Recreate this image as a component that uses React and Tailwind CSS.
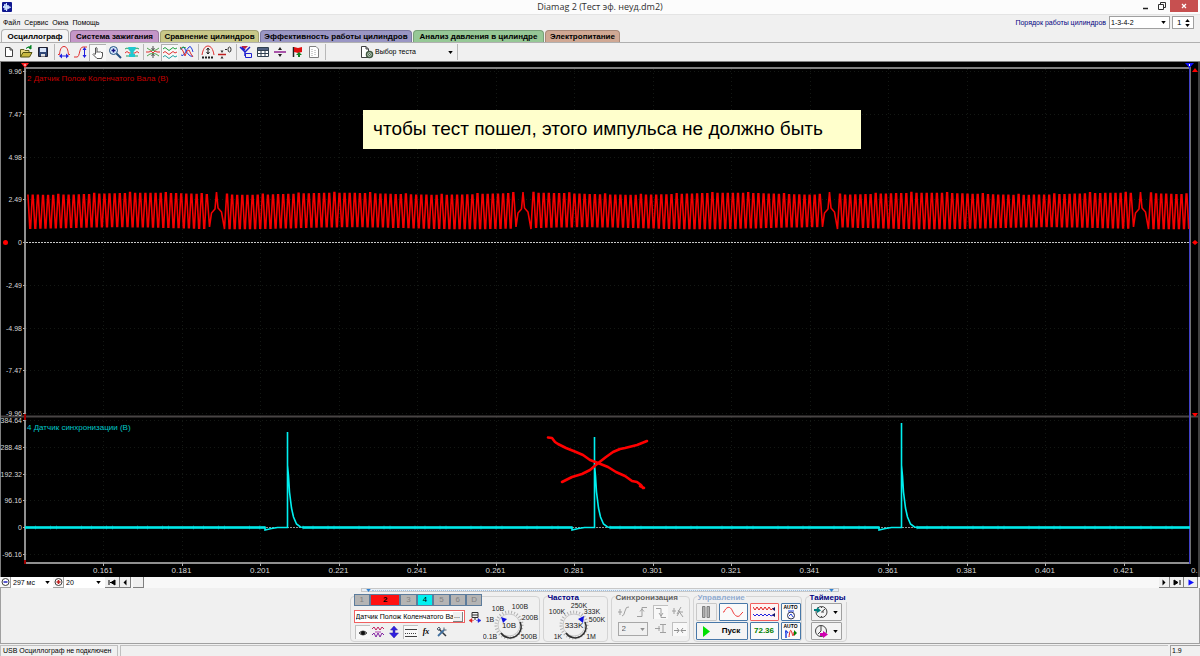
import React, { useState } from "react";

const TABS = [
  { name: "Осциллограф", style: "w-[68px] bg-[#f4f4f4] border-[#b0b0b0]" },
  { name: "Система зажигания", style: "w-[89px] bg-[#c496c8] border-[#9a78a0]" },
  { name: "Сравнение цилиндров", style: "w-[99px] bg-[#c8c888] border-[#a0a070]" },
  { name: "Эффективность работы цилиндров", style: "w-[152px] bg-[#9a96c4] border-[#7c78a0]" },
  { name: "Анализ давления в цилиндре", style: "w-[131px] bg-[#96c896] border-[#78a078]" },
  { name: "Электропитание", style: "w-[75px] bg-[#d0a894] border-[#a88878]" },
];

const CHANNELS = [
  { name: "1", style: "w-4 bg-[#b4b4b4] text-[#808080]" },
  { name: "2", style: "w-[30px] bg-[#ff1010] text-black font-bold" },
  { name: "3", style: "w-4 bg-[#b4b4b4] text-[#808080]" },
  { name: "4", style: "w-4 bg-[#00f0f0] text-black" },
  { name: "5", style: "w-4 bg-[#b4b4b4] text-[#808080]" },
  { name: "6", style: "w-4 bg-[#b4b4b4] text-[#808080]" },
  { name: "D", style: "w-4 bg-[#b4b4b4] text-[#808080]" },
];

const Icon = ({ children, className = "w-[14px] h-[14px]", box = "0 0 14 14" }) => (
  <svg viewBox={box} className={`block shrink-0 ${className}`} fill="none" strokeWidth="1">
    {children}
  </svg>
);

const ToolButton = ({ label, pressed, children }) => (
  <button
    aria-label={label}
    title={label}
    className={`w-[17px] h-[17px] shrink-0 flex items-center justify-center ${
      pressed ? "bg-[#f8f8f8] border-t border-l border-[#b0b0b0]" : ""
    }`}
  >
    <Icon>{children}</Icon>
  </button>
);

const ToolSep = () => <div className="w-1 h-4 shrink-0 border-r border-[#b8b8b8]" />;

const Arrow = ({ className = "" }) => (
  <svg viewBox="0 0 6 4" className={`w-[5px] h-[3px] pointer-events-none ${className}`}>
    <path d="M0 0H6L3 4Z" fill="currentColor" />
  </svg>
);

/* ---------- signals ---------- */

const GAPS = [216.5, 523, 829.5, 1140.5];

const crankPath = () => {
  const pts = [];
  const step = 5.11;
  // crank wheel: 58 teeth and a gap, repeated for every turn
  let start = GAPS[0] - 312;
  [...GAPS, 1450].forEach((gap) => {
    const from = start + 10.5;
    const to = gap - 9.7;
    const n = Math.round((to - from) / step);
    const w = (to - from) / n;
    for (let i = 0; i <= n; i++) {
      const x = from + i * w;
      if (x < 26 || x > 1188) continue;
      const top = 133.5 + 1 * Math.sin(x / 31) + (i % 7 === 0 ? -1 : 0);
      const low = 166.5 + 1 * Math.cos(x / 37);
      pts.push([x - 0.4, top], [x + 0.4, top]);
      if (i < n) pts.push([x + w / 2 - 0.4, low], [x + w / 2 + 0.4, low]);
    }
    if (gap < 1190) {
      pts.push([gap - 7, 166], [gap - 5, 152], [gap - 1.5, 148], [gap, 131]);
      pts.push([gap + 1.5, 147], [gap + 5, 151], [gap + 8, 168]);
    }
    start = gap;
  });
  return pts.map(([x, y]) => `${x.toFixed(1)},${y.toFixed(1)}`).join(" ");
};

const PULSES = [
  { x: 287.5, top: 371 },
  { x: 594.5, top: 376 },
  { x: 901.5, top: 362 },
];

const syncPath = () => {
  let d = "M25 466.5";
  PULSES.forEach(({ x, top }) => {
    d += `H${x - 22.5}V469L${x - 16} 467.5L${x - 10} 466.5H${x}V${top}`;
    d += `V404L${x + 1} 415L${x + 2} 431L${x + 4} 447L${x + 6} 456L${x + 9} 463L${x + 13} 466L${x + 17} 466.5`;
  });
  return d + "H1190";
};

// thick noisy level between the pulses
const syncLevel = () => {
  let d = "";
  let from = 25;
  PULSES.forEach(({ x }) => {
    d += `M${from} 466.5H${x - 22}`;
    from = x + 15;
  });
  return `${d}M${from} 466.5H1190`;
};

const TOP_LABELS = ["9.96", "7.47", "4.98", "2.49", "0", "-2.49", "-4.98", "-7.47", "-9.96"];
const LOW_LABELS = ["384.64", "288.48", "192.32", "96.16", "0", "-96.16"];
const TIMES = [
  "0.161", "0.181", "0.201", "0.221", "0.241", "0.261", "0.281", "0.301",
  "0.321", "0.341", "0.361", "0.381", "0.401", "0.421",
];

const Scope = () => (
  <svg viewBox="0 0 1200 516" className="block w-full bg-black" fontFamily="Liberation Sans, Arial, sans-serif">
    <path d="M0 .5H1200M.5 0V516M1199 0V516" stroke="#808080" fill="none" />
    <g stroke="#141814" strokeDasharray="1 3">
      {TIMES.map((t, i) => (
        <path key={t} d={`M${Math.round(103 + i * 78.5) + 0.5} 8V502`} />
      ))}
      {TOP_LABELS.map((t, i) => (
        <path key={t} d={`M26 ${Math.round(10 + i * 42.75) + 0.5}H1189`} />
      ))}
      {LOW_LABELS.map((t, i) => (
        <path key={t} d={`M26 ${Math.round(359 + i * 26.8) + 0.5}H1189`} />
      ))}
    </g>

    {/* frame */}
    <path d="M24 7H1190" stroke="#808080" strokeWidth="2" />
    <path d="M25 6V503" stroke="#909090" strokeWidth="2" />
    <path d="M1 355.5H1198" stroke="#484444" strokeWidth="2" />
    <path d="M24 502H1190" stroke="#909090" strokeWidth="2" />
    <path d="M1190.5 6V503" stroke="#707070" />
    <path d="M1189.5 6V503" stroke="#4040c8" />

    <g fill="#d8d8d8" fontSize="7" textAnchor="end">
      {TOP_LABELS.map((t, i) => (
        <text key={t} x="22" y={13 + i * 42.75}>{t}</text>
      ))}
      {LOW_LABELS.map((t, i) => (
        <text key={t} x="22" y={362 + i * 26.8}>{t}</text>
      ))}
    </g>
    <g stroke="#b0b0b0">
      {TOP_LABELS.map((t, i) => (
        <path key={t} d={`M23 ${Math.round(10 + i * 42.75) + 0.5}h2`} />
      ))}
      {LOW_LABELS.map((t, i) => (
        <path key={t} d={`M23 ${Math.round(359 + i * 26.8) + 0.5}h2`} />
      ))}
      {TIMES.map((t, i) => (
        <path key={t} d={`M${Math.round(103 + i * 78.5) + 0.5} 502v3`} />
      ))}
    </g>
    <g fill="#d8d8d8" fontSize="8" textAnchor="middle">
      {TIMES.map((t, i) => (
        <text key={t} x={103 + i * 78.5} y="512">{t}</text>
      ))}
    </g>
    <text x="1191" y="512" fontSize="8" fill="#d8d8d8">0.</text>

    <path d="M26 181.5H1189" stroke="#c8c8c8" strokeDasharray="2 1" />
    <path d="M26 466.5H1189" stroke="#909090" strokeDasharray="2 1" />

    <polyline points={crankPath()} fill="none" stroke="#f40000" strokeWidth="1.6" />
    <path d={syncPath()} fill="none" stroke="#00f0f0" strokeWidth="1.6" />
    <path d={syncLevel()} fill="none" stroke="#00e8e8" strokeWidth="2.6" />
    <path d={syncLevel()} fill="none" stroke="#00e8e8" strokeWidth="4" strokeDasharray="1 9 1 14 1 5 1 24" opacity="0.4" />

    <text x="27" y="20" fontSize="8" fill="#c40000">2 Датчик Полож Коленчатого Вала (В)</text>
    <text x="27" y="369" fontSize="8" fill="#00c8c8">4 Датчик синхронизации (В)</text>

    {/* cursors and range marks */}
    <path d="M21 2H29L25 7Z" fill="#ff2020" />
    <path d="M25 3V5" stroke="#fff" />
    <path d="M25 353V359M25 499V503" stroke="#a00000" strokeWidth="2" />
    <path d="M1185 2H1194L1189.500 7Z" fill="#1010ff" />
    <path d="M1189.500 3V5" stroke="#fff" />
    <path d="M1192 11L1195 7L1198 11Z" fill="#f00" />
    <path d="M1192 352H1198L1195 356Z" fill="#f00" />
    <circle cx="5.500" cy="181.500" r="2.500" fill="#f00" />
    <path d="M1192 181.500L1195 179L1198 181.500L1195 184Z" fill="#f00" />

    {/* hand drawn cross */}
    <g stroke="#ff0000" strokeWidth="2.6" strokeLinecap="round" strokeLinejoin="round" fill="none">
      <path d="M548 376.500L552 377L555 381L558 383L566 387L576 391L583 394L590 399L598 402L608 406L616 411L625 415L632 420L637 421L641 424L643 427M640 425L644 427" />
      <path d="M562 421L572 416L582 413L590 409L597 403L606 396L613 391L620 388L625 387L637 384L647 380" />
    </g>
  </svg>
);

/* ---------- bottom panel ---------- */

const Group = ({ title, color = "text-[#000080]", className = "", children }) => (
  <fieldset className={`relative mt-1 h-[46px] min-w-0 border border-[#d4d4d4] rounded-sm ${className}`}>
    {title && (
      <legend className={`absolute -top-[4px] left-[3px] px-px bg-[#f0f0f0] text-[8px] leading-[9px] font-bold ${color}`}>
        {title}
      </legend>
    )}
    {children}
  </fieldset>
);

const Knob = ({ value, labels, width, cx, pointer }) => (
  <svg viewBox={`0 0 ${width} 44`} className="block shrink-0 h-[44px]" fontFamily="Liberation Sans, Arial, sans-serif" style={{ width }}>
    <circle cx={cx} cy="28" r="13" fill="none" stroke="#b0b0b0" strokeWidth="3" strokeDasharray="1 2" />
    <circle cx={cx} cy="28" r="11" fill="#f0f0f0" stroke="#c8c8c8" />
    <path d={`M${cx - 8} 36A11 11 0 0 0 ${cx + 11} 25`} fill="none" stroke="#303030" strokeWidth="1.5" />
    <path d={pointer} fill="#1010e0" />
    <text x={cx} y="31" fontSize="8" textAnchor="middle" fill="#202020">{value}</text>
    <g fontSize="7" textAnchor="middle" fill="#202020">
      {labels.map(([t, x, y]) => (
        <text key={t} x={x} y={y}>{t}</text>
      ))}
    </g>
  </svg>
);

const PanelButton = ({ label, className = "", children }) => (
  <button
    aria-label={label}
    className={`h-[18px] flex items-center justify-center border rounded-[1px] ${className}`}
  >
    {children}
  </button>
);

const SmallButton = ({ label, pressed, children }) => (
  <button
    aria-label={label}
    className={`w-[15px] h-[14px] flex items-center justify-center ${
      pressed ? "bg-[#f8f8f8] border-t border-l border-[#c0c0c0]" : ""
    }`}
  >
    <Icon className="w-3 h-3" box="0 0 12 12">{children}</Icon>
  </button>
);

const ControlPanel = () => (
  <div className="flex justify-center gap-[3px] h-[51px] pr-1">
    <Group className="w-[190px]">
      <div className="flex">
        <div className="w-[132px] -mt-[3px] pl-[3px]">
          <div className="flex">
            {CHANNELS.map((c) => (
              <button
                key={c.name}
                className={`h-3 flex-auto text-[8px] leading-[10px] border border-[#5c7c9c] ${c.style}`}
              >
                {c.name}
              </button>
            ))}
          </div>
          <div className="flex items-center mt-1 gap-1">
            <div className="flex items-center w-[111px] h-[13px] px-px bg-white border border-[#f06060]">
              <input
                aria-label="Датчик"
                defaultValue="Датчик Полож Коленчатого Вала"
                className="min-w-0 flex-1 h-[11px] text-[7px] outline-none"
              />
              <button aria-label="Выбрать датчик" className="w-[10px] h-[10px] bg-[#f0f0f0] border-r border-b border-[#808080] text-[7px] leading-[6px]">
                ...
              </button>
            </div>
            <Icon className="w-3 h-3" box="0 0 12 12">
              <path d="M3 1.500H9V6.500H3ZM3 4H9M6 7V9" stroke="#303030" />
              <path d="M0 9.500L3 7.500V11.500ZM1 9.500H5" fill="#e02020" stroke="#e02020" strokeWidth=".5" />
              <path d="M12 9.500L9 7.500V11.500ZM7 9.500H11" fill="#2020e0" stroke="#2020e0" strokeWidth=".5" />
            </Icon>
          </div>
          <div className="flex mt-[2px] gap-px pl-px">
            <SmallButton label="Показать канал" pressed>
              <path d="M2 6Q6 2 10 6Q6 10 2 6Z" fill="#909090" stroke="#505050" />
              <circle cx="6" cy="6" r="2" fill="#101010" />
            </SmallButton>
            <SmallButton label="Фильтр">
              <path d="M0 3L2 1L4 4L6 1L8 4L10 1L12 3" stroke="#c02060" />
              <path d="M0 9L2 7L4 11L6 7L8 11L10 7L12 9" stroke="#8020a0" />
              <path d="M3 6H9" stroke="#b040b0" />
            </SmallButton>
            <SmallButton label="Масштаб">
              <path d="M6 0L9.500 4H7V7H10.500L6 12L1.500 7H5V4H2.500Z" fill="#3020e0" stroke="#3020a0" strokeWidth=".5" />
            </SmallButton>
            <SmallButton label="Уровни" pressed>
              <path d="M0 2.500H12M0 9.500H12" stroke="#404040" />
              <path d="M0 6.500H12" stroke="#404040" strokeDasharray="1 1" />
            </SmallButton>
            <button aria-label="Функция" className="w-[15px] h-[14px] text-[8px] leading-[14px] italic font-bold font-['Liberation_Serif',serif]">
              fx
            </button>
            <SmallButton label="Настройки">
              <path d="M3 3L10 10" stroke="#303840" strokeWidth="1.500" />
              <path d="M2 10L8 4" stroke="#4070a0" strokeWidth="1.800" />
              <path d="M1 3L3 1L4.500 3L3 4.500ZM8 1.500V4H10.500" stroke="#506070" />
            </SmallButton>
          </div>
        </div>
        <Knob
          value="10В"
          width={56}
          cx={26}
          pointer="M18 20L24 22L20 26Z"
          labels={[["10В", 15, 14], ["100В", 37, 12], ["200В", 47, 23], ["500В", 46, 42], ["0.1В", 7, 42], ["1В", 7, 25]]}
        />
      </div>
    </Group>

    <Group title="Частота" className="w-[65px]">
      <Knob
        value="333K"
        width={63}
        cx={30}
        pointer="M40 19L34 22L39 26Z"
        labels={[["100K", 13, 17], ["250K", 35, 11], ["333K", 48, 17], ["500K", 53, 25], ["1K", 14, 42], ["1M", 47, 42]]}
      />
    </Group>

    <Group title="Синхронизация" color="text-[#606060]" className="w-[79px]">
      <div className="flex gap-[3px] pt-2 pl-[5px]">
        <SmallButton label="Наклон">
          <path d="M0 6H4M2 3V9M4 10Q6 10 7 5T11 1" stroke="#a0a0a0" />
        </SmallButton>
        <SmallButton label="Фронт">
          <path d="M1 10.500H6V1.500H11M4 5.500L6 3L8 5.500" stroke="#a0a0a0" />
        </SmallButton>
        <SmallButton label="Спад" pressed>
          <path d="M1 1.500H6V10.500H11M4 6L6 9L8 6" stroke="#a0a0a0" />
        </SmallButton>
        <SmallButton label="Сигнал">
          <path d="M0 5H4M2 2V8M5 8L9 1M6 4L11 11M7 6L11 6M5 10L8 5" stroke="#a0a0a0" />
        </SmallButton>
      </div>
      <div className="flex items-center mt-[3px] pl-[6px]">
        <div className="relative w-[30px]">
          <select aria-label="Канал синхронизации" className="appearance-none block w-full h-[14px] pl-[3px] border border-[#a8a8a8] text-[8px] leading-[12px] text-[#606060]">
            <option>2</option>
          </select>
          <Arrow className="absolute right-[3px] top-[6px] text-[#909090]" />
        </div>
        <div className="flex gap-[3px] pl-[6px]">
          <SmallButton label="Уровень">
            <path d="M5 1.500H11M5 9.500H11M0 5.500H5M8 2V9M4 3V8" stroke="#a0a0a0" />
          </SmallButton>
          <SmallButton label="Положение" pressed>
            <path d="M0 6.500H5M3 4L5 6.500L3 9M12 6.500H7M9 4L7 6.500L9 9" stroke="#909090" />
          </SmallButton>
        </div>
      </div>
    </Group>

    <Group title="Управление" color="text-[#90acd0]" className="w-[109px]">
      <div className="flex gap-0.5 pt-[6px] pl-0.5">
        <PanelButton label="Пауза" className="w-[21px] border-[#c8c8c8]">
          <Icon className="w-2 h-3" box="0 0 8 12">
            <path d="M.5 .500H3V11.500H.5ZM5 .500H7.500V11.500H5Z" fill="#b0b0b0" stroke="#808080" />
          </Icon>
        </PanelButton>
        <PanelButton label="Синус" className="w-[29px] border-[#4878a8] bg-[#fafafa]">
          <Icon className="w-5 h-3" box="0 0 20 12">
            <path d="M0 6H1C3 1 7 -1 9.500 5S16 12 18 8L20 6" stroke="#f04040" />
          </Icon>
        </PanelButton>
        <PanelButton label="Сигналы" className="w-[29px] border-[#f06060] bg-[#fff4f4]">
          <Icon className="w-[22px] h-3" box="0 0 22 12">
            <path d="M0 1L2 4L4 1L6 4L8 1L10 4L12 1L14 4L16 1L18 4L20 2" stroke="#e02020" />
            <path d="M0 8L2 10L4 8L6 10L8 8L10 10L12 8L14 10L16 8L18 10L20 9" stroke="#2020e0" />
            <path d="M19 3L22 1V5ZM19 9L22 7V11Z" fill="#101060" />
          </Icon>
        </PanelButton>
        <PanelButton label="Авто уровень" className="w-5 flex-col border-[#4878a8] bg-[#fafafa]">
          <span className="text-[5px] leading-[5px] font-bold">AUTO</span>
          <Icon className="w-[10px] h-[10px]" box="0 0 10 10">
            <circle cx="5" cy="5.500" r="3.500" stroke="#303050" />
            <path d="M2 1H8M3 6L5 4L7 7" stroke="#2040e0" />
          </Icon>
        </PanelButton>
      </div>
      <div className="flex gap-0.5 pt-px pl-0.5">
        <PanelButton className="w-[52px] gap-3 border-[#4878a8] bg-[#f4f4f4] text-[8px] font-bold">
          <Icon className="w-[7px] h-[11px]" box="0 0 7 11">
            <path d="M0 0L7 5.500L0 11Z" fill="#00e000" />
          </Icon>
          Пуск
        </PanelButton>
        <PanelButton className="w-[29px] border-[#4878a8] bg-[#fafafa] text-[8px] font-bold text-[#008000]">
          72.36
        </PanelButton>
        <PanelButton label="Авто запуск" className="w-5 flex-col border-[#4878a8] bg-[#fafafa]">
          <span className="text-[5px] leading-[5px] font-bold">AUTO</span>
          <Icon className="w-3 h-[10px]" box="0 0 12 10">
            <path d="M1 9V4M0 4L1 2L3 4" stroke="#2040e0" strokeWidth="1.500" />
            <path d="M4 8C5 0 6 0 7 4S8 8 9 3" stroke="#e02020" />
            <path d="M9 1L12 4L9 7Z" fill="#008000" />
          </Icon>
        </PanelButton>
      </div>
    </Group>

    <Group title="Таймеры" className="w-[42px]">
      <div className="flex flex-col gap-px pt-[6px] pl-[5px]">
        <PanelButton label="Таймер запуска" className="w-[31px] gap-[5px] border-[#a0a0a0] bg-[#f4f4f4]">
          <Icon>
            <circle cx="7.500" cy="7" r="5.500" stroke="#404040" />
            <path d="M7.500 7L11 4M7.500 7H10M7.500 2V3M7.500 11V12" stroke="#404040" />
            <path d="M0 4H3V2L7 5.500L3 8V6H0Z" fill="#008080" />
          </Icon>
          <Arrow />
        </PanelButton>
        <PanelButton label="Таймер остановки" className="w-[31px] gap-[5px] border-[#a0a0a0] bg-[#f4f4f4]">
          <Icon>
            <circle cx="7" cy="7" r="5.500" stroke="#404040" />
            <path d="M7 7V2M7 7L4 10" stroke="#404040" />
            <path d="M6 9H9V7L14 10.500L9 14V12H6Z" fill="#d000b0" />
          </Icon>
          <Arrow />
        </PanelButton>
      </div>
    </Group>
  </div>
);

const NavButton = ({ label, className = "w-[14px]", children }) => (
  <button
    aria-label={label}
    className={`h-[11px] flex items-center justify-center bg-[#f0f0f0] border-r border-b border-[#808080] ${className}`}
  >
    <Icon className="w-2 h-[7px]" box="0 0 8 7">{children}</Icon>
  </button>
);

const App = () => {
  const [order, setOrder] = useState("1-3-4-2");
  const [cylinder, setCylinder] = useState("1");

  return (
    <div className="min-h-screen flex flex-col bg-[#f0f0f0] text-black text-[8px] leading-[10px] overflow-hidden font-['Liberation_Sans',Arial,sans-serif]">
      {/* title bar */}
      <header className="h-[14px] shrink-0 flex items-center bg-[#fcfcfc]">
        <div className="flex-1 pl-[2px]">
          <Icon className="w-[10px] h-[10px]" box="0 0 10 10">
            <rect width="10" height="10" rx="1" fill="#101890" />
            <path d="M1 5H2V4V6L3 2V8L4.500 1V9L6 3V7L7 4V6L9 5" stroke="#d0e4ff" />
          </Icon>
        </div>
        <h1 className="text-[9px] leading-[14px] text-[#303030] font-['Open_Sans',sans-serif]">
          Diamag 2 (Тест эф. неуд.dm2)
        </h1>
        <div className="flex-1 flex justify-end self-start pr-[2px]">
          <button aria-label="Свернуть" className="w-4 h-3 flex items-center justify-center">
            <Icon className="w-2 h-2" box="0 0 8 8"><path d="M1 6.500H6" stroke="#202020" strokeWidth="1.500" /></Icon>
          </button>
          <button aria-label="Восстановить" className="w-4 h-3 flex items-center justify-center">
            <Icon className="w-2 h-2" box="0 0 8 8"><path d="M.5 2.500H5.500V7.500H.5ZM2.500 2V.500H7.500V5.500H6" stroke="#303030" /></Icon>
          </button>
          <button aria-label="Закрыть" className="w-7 h-3 flex items-center justify-center bg-[#c75050]">
            <Icon className="w-[6px] h-[6px]" box="0 0 6 6"><path d="M1 1L5 5M5 1L1 5" stroke="#fff" strokeWidth="1.200" /></Icon>
          </button>
        </div>
      </header>

      {/* menu */}
      <div className="h-4 shrink-0 flex items-center border-t border-[#e4e4e4] pl-[3px] pr-[6px]">
        <nav className="flex gap-1 flex-1 text-[7px]">
          <button>Файл</button>
          <button>Сервис</button>
          <button>Окна</button>
          <button>Помощь</button>
        </nav>
        <label htmlFor="order" className="text-[7px] text-[#000080] pr-[3px]">Порядок работы цилиндров</label>
        <div className="relative w-[61px]">
          <select
            id="order"
            value={order}
            onChange={(e) => setOrder(e.target.value)}
            className="appearance-none block w-full h-[13px] pl-px bg-white border border-[#a0a0a0] text-[7px] leading-[11px]"
          >
            <option>1-3-4-2</option>
            <option>1-2-4-3</option>
          </select>
          <Arrow className="absolute right-1 top-[5px]" />
        </div>
        <div className="flex items-center w-[22px] h-[13px] ml-[2px] bg-white border border-[#a0a0a0]">
          <input
            aria-label="Цилиндр"
            value={cylinder}
            onChange={(e) => setCylinder(e.target.value)}
            className="w-3 h-[11px] pl-1 text-[8px] outline-none"
          />
          <div className="flex flex-col gap-[2px]">
            <button aria-label="Больше"><Arrow className="rotate-180" /></button>
            <button aria-label="Меньше"><Arrow /></button>
          </div>
        </div>
      </div>

      {/* tabs */}
      <div className="h-[13px] shrink-0 flex items-end gap-px pl-px border-b border-[#b0b0b0]">
        {TABS.map((tab, i) => (
          <button
            key={tab.name}
            className={`text-[8px] leading-[11px] font-bold whitespace-nowrap border-t border-x rounded-t-sm ${tab.style} ${
              i === 0 ? "h-[13px]" : "h-3"
            }`}
          >
            {tab.name}
          </button>
        ))}
      </div>

      {/* toolbar */}
      <div className="h-[18px] shrink-0 flex items-center">
        <ToolButton label="Новый">
          <path d="M3.500 2.500H8L10.500 5V11.500H3.500ZM8 2.500V5H10.500" fill="#fff" stroke="#404040" />
        </ToolButton>
        <ToolButton label="Открыть">
          <path d="M1.500 12V4.500H5L6 5.500H10V7.500" fill="#e8d880" stroke="#606020" />
          <path d="M1.500 12L4 7.500H13L10.500 12Z" fill="#c8b840" stroke="#505010" />
          <path d="M7 3.500Q9 1 12 2M12 0V4L10 3" stroke="#008020" fill="#008020" />
        </ToolButton>
        <ToolButton label="Сохранить">
          <path d="M2.500 2.500H11.500V11.500H2.500Z" fill="#304878" stroke="#202030" />
          <path d="M4 3H10V7H4Z" fill="#d8e4f8" />
          <path d="M5 9H9V11.500H5Z" fill="#e0e0e0" />
        </ToolButton>
        <ToolSep />
        <ToolButton label="Масштаб по времени">
          <path d="M1 9.500H2.500C3 5 4 1.500 7 1.500S11 5 11.500 9.500H13" stroke="#e03030" />
          <path d="M3 11H11" stroke="#2020e0" />
          <path d="M2 11L5 8.500V13.500ZM12 11L9 8.500V13.500Z" fill="#2020e0" />
        </ToolButton>
        <ToolButton label="Масштаб по уровню">
          <path d="M0 12H3C6 12 5 2 9 2H13" stroke="#e03030" />
          <path d="M10.500 3V11" stroke="#2020e0" />
          <path d="M10.500 2L8.500 5H12.500ZM10.500 13L8.500 10H12.500Z" fill="#2020e0" />
        </ToolButton>
        <ToolButton label="Рука" pressed>
          <path d="M4.500 8V2Q5.300 1 6 2V6.500L7 5.500L8 6.500L9 5.500L10 6.500L11.500 6.500V10L10.500 12.500H6L2 8.500L3 7.500L4.500 9" fill="#fff" stroke="#404040" strokeWidth=".9" />
        </ToolButton>
        <ToolButton label="Лупа">
          <circle cx="5.500" cy="5.500" r="4" fill="#d8ecff" stroke="#205080" />
          <path d="M3.500 5.500H7.500M5.500 3.500V7.500" stroke="#101080" strokeWidth="1.500" />
          <path d="M8.500 8.500L13 13" stroke="#205080" strokeWidth="2" />
        </ToolButton>
        <ToolButton label="Фильтр сигнала">
          <path d="M0 4Q2 2 4 4H10Q12 2 14 4M1 11H13" stroke="#20a060" />
          <path d="M0 8Q2 5 4 8H10Q12 5 14 8" stroke="#e03030" />
          <path d="M3 2H11L10 5L8.500 7V9H10V12H4V9H5.500V7L4 5Z" fill="#20c8d0" />
        </ToolButton>
        <ToolSep />
        <ToolButton label="Совместить">
          <path d="M1 3L4 5L7 5.500L10 5L13 3M1 11L4 9L7 8.500L10 9L13 11" stroke="#50a050" />
          <path d="M0 7H3L5 6L7 8L9 6L11 7H14" stroke="#e03030" />
          <path d="M7 1V4M7 13V10M5.500 3L7 5L8.500 3M5.500 11L7 9L8.500 11" stroke="#505050" />
        </ToolButton>
        <ToolButton label="Разделить" pressed>
          <path d="M0 3Q2 0 4 3T8 3T12 3L14 2" stroke="#20a040" />
          <path d="M0 7Q2 4 4 7T8 7T12 7L14 6" stroke="#e03030" />
          <path d="M0 11Q2 8 4 11T8 11T12 11L14 10" stroke="#20a0a0" />
        </ToolButton>
        <ToolButton label="Наложить">
          <path d="M1 5Q3 0 5 4T9 10T13 11" stroke="#2040e0" />
          <path d="M1 10Q3 12 5 8T9 2T13 7" stroke="#2040e0" />
          <path d="M0 2L3 6L5 11L7 6L9 5L11 9L13 12" stroke="#e03030" />
          <path d="M0 4L3 2L6 3" stroke="#20a040" />
        </ToolButton>
        <ToolSep />
        <ToolButton label="Авто масштаб">
          <path d="M1 10C2 4 4 1 7 1S12 4 13 10" stroke="#e03030" />
          <path d="M7 3V9M5.500 5L7 3L8.500 5M5.500 7L7 9L8.500 7" stroke="#202020" />
          <path d="M1 12.500H13" stroke="#202020" strokeWidth="2" strokeDasharray="2 1" />
        </ToolButton>
        <ToolButton label="Установить ноль">
          <path d="M0 9.500H8" stroke="#c02020" strokeWidth="1.500" />
          <path d="M2.500 5.500H5.500L4 8ZM2.500 13.500H5.500L4 11Z" fill="#303030" />
          <path d="M7 4.500H9" stroke="#303030" />
          <ellipse cx="11.500" cy="4.500" rx="1.500" ry="2.500" stroke="#303030" />
        </ToolButton>
        <ToolSep />
        <ToolButton label="Измерения">
          <path d="M1 2L6 7L11 2M6 7V11M3 2L6 5" stroke="#2020d0" strokeWidth="1.500" />
          <path d="M2 1H9L6 4Z" fill="#c02040" />
          <path d="M6.500 8.500H12.500V12.500H6.500Z" stroke="#2020d0" />
        </ToolButton>
        <ToolButton label="Таблица">
          <path d="M1.500 2.500H12.500V11.500H1.500ZM1 5.500H13M1 8.500H13M5 3V12M9 3V12" fill="#fff" stroke="#304050" />
          <path d="M2 3H12V5H2Z" fill="#506080" />
        </ToolButton>
        <ToolButton label="Делитель">
          <path d="M1 7H13" stroke="#902090" strokeWidth="1.500" />
          <path d="M7 2L9 5H5ZM7 12L9 9H5Z" fill="#202020" />
        </ToolButton>
        <ToolButton label="Метка">
          <path d="M3.500 2V12" stroke="#202020" strokeWidth="1.500" />
          <path d="M4 2L8 3L12 2V7L8 8L4 7Z" fill="#e01010" />
          <path d="M9 7L12 10H10V12H8V10H6Z" fill="#108020" />
        </ToolButton>
        <ToolButton label="Отчёт">
          <path d="M2.500 1.500H9L11.500 4V12.500H2.500Z" fill="#fff" stroke="#808080" />
          <path d="M5 4V11M8 5V11" stroke="#a0a0a0" strokeDasharray="1 1" />
        </ToolButton>
        <ToolSep />
        <div className="relative flex items-center w-[132px] h-4 pl-[34px] border-r border-[#b8b8b8]">
          <Icon>
            <path d="M1.500 1.500H6L8.500 4V12.500H1.500ZM6 1.500V4H8.500" fill="#fff" stroke="#404040" />
            <circle cx="9.500" cy="9.500" r="3" fill="#c8d8c8" stroke="#405840" strokeWidth="1.500" />
            <circle cx="9.500" cy="9.500" r="1" stroke="#405840" />
          </Icon>
          <select aria-label="Выбор теста" className="appearance-none flex-1 min-w-0 pl-px h-3 text-[7px] leading-3">
            <option>Выбор теста</option>
          </select>
          <Arrow className="absolute right-1 top-[7px]" />
        </div>
      </div>

      {/* oscilloscope */}
      <main className="relative shrink-0">
        <Scope />
        <div className="absolute left-[363px] top-[49px] w-[498px] h-[39px] pl-[10px] bg-[#ffffcc] text-[19px] leading-[37px] whitespace-nowrap">
          чтобы тест пошел, этого импульса не должно быть
        </div>
      </main>

      {/* time scale and scrolling */}
      <div className="h-[11px] shrink-0 flex items-center bg-[#f8f8f8] pr-[2px]">
        <button aria-label="Уменьшить" className="w-[11px] h-[11px] border-r border-b border-[#a0a0a0]">
          <Icon className="w-[10px] h-[10px]" box="0 0 10 10">
            <circle cx="5.500" cy="5" r="3.500" fill="#fff" stroke="#404040" />
            <path d="M3.500 5H7.500" stroke="#2020c0" strokeWidth="1.500" />
          </Icon>
        </button>
        <div className="relative w-[42px]">
          <select aria-label="Развёртка" className="appearance-none block w-full h-[11px] pl-[2px] bg-white text-[7px] leading-[11px]">
            <option>297 мс</option>
          </select>
          <Arrow className="absolute right-[3px] top-1" />
        </div>
        <button aria-label="Увеличить" className="w-[11px] h-[11px] border-r border-b border-[#a0a0a0]">
          <Icon className="w-[10px] h-[10px]" box="0 0 10 10">
            <circle cx="5.500" cy="5" r="3.500" fill="#fff" stroke="#404040" />
            <path d="M3.500 5H7.500M5.500 3V7" stroke="#c02020" strokeWidth="1.500" />
          </Icon>
        </button>
        <div className="relative w-[41px]">
          <select aria-label="Скорость" className="appearance-none block w-full h-[11px] pl-[2px] bg-white text-[7px] leading-[11px]">
            <option>20</option>
          </select>
          <Arrow className="absolute right-1 top-1" />
        </div>
        <NavButton label="В начало" className="w-[15px]"><path d="M1 1V6M7 1V6L3 3.500ZM2 3.500H4" fill="#000" stroke="#000" /></NavButton>
        <NavButton label="Назад" className="w-[11px]"><path d="M5.500 .500V6.500L2.500 3.500Z" fill="#000" /></NavButton>
        <div className="flex-1 pl-[2px]">
          <NavButton label="Полоса прокрутки" className="w-[11px]" />
        </div>
        <NavButton label="Вперёд" className="w-[11px]"><path d="M2.500 .500V6.500L5.500 3.500Z" fill="#000" /></NavButton>
        <NavButton label="В конец"><path d="M7 1V6M1 1V6L5 3.500Z" fill="#000" stroke="#000" /></NavButton>
        <NavButton label="Воспроизвести"><path d="M1.500 .500V6.500L7 3.500Z" fill="#1010ff" /></NavButton>
      </div>

      {/* controls */}
      <div className="flex-1 border-x border-b border-[#a0a0a0]">
        <div className="h-1 w-[478px] mx-auto flex items-center justify-between px-1 border border-[#c8c8c8] bg-[#e8f0f8] text-[#3080d0]">
          <Arrow />
          <div className="flex-1 mx-px border-t border-dotted border-[#a0c0e0]" />
          <Arrow />
        </div>
        <ControlPanel />
      </div>

      {/* status bar */}
      <footer className="h-3 shrink-0 flex gap-[2px] pt-px text-[7px] leading-[10px]">
        <div className="w-[118px] pl-[2px] border-t border-l border-r border-[#c0c0c0]">USB Осциллограф не подключен</div>
        <div className="flex-1 border-t border-l border-[#c0c0c0]" />
        <div className="w-[30px] pl-px border-t border-l border-[#a0a0a0]">1.9</div>
      </footer>
    </div>
  );
};

export default App;
